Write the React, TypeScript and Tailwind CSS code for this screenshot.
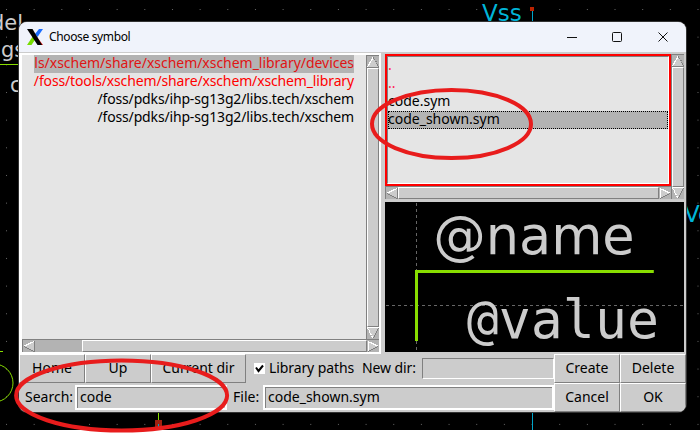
import type { ReactNode } from 'react';

const UI = "font-['Noto_Sans',sans-serif]";

type Dir = 'up' | 'down' | 'left' | 'right';

function Arrow({ dir }: { dir: Dir }) {
  const W = '#ffffff';
  const D = '#808080';
  const edges: Record<Dir, [string, string, string][]> = {
    up: [['M6 1.5L0.5 11', W, ''], ['M6.5 1.5L12 11', D, '1 1'], ['M0 11.5H12', D, '']],
    down: [['M0.5 1L6 11', W, '2 1'], ['M0 0.5H12', W, ''], ['M11.5 1L6.5 11', D, '']],
    left: [['M11 1.5L1 6', W, ''], ['M11.5 1V12', D, ''], ['M1 6.5L11 11.5', D, '']],
    right: [['M1 1.5L11 6', W, ''], ['M1.5 1V11', W, ''], ['M11 6.5L1 11.5', D, '']],
  };
  const fill = { up: '6,1 12,11.5 0,11.5', down: '0,0.5 12,0.5 6,11', left: '1,6 11.5,1 11.5,12', right: '11,6 1,1 1,12' };
  return (
    <svg width="12" height="12" viewBox="0 0 12 12" className="block shrink-0" shapeRendering="crispEdges">
      <polygon points={fill[dir]} fill="#cccccc" />
      {edges[dir].map(([d, c, dash]) => (
        <path key={d} d={d} stroke={c} strokeWidth="1.2" strokeDasharray={dash || undefined} fill="none" />
      ))}
    </svg>
  );
}

function VScroll() {
  return (
    <div className="flex w-[13px] shrink-0 flex-col border-t border-l border-[#808080] bg-[#b3b3b3]">
      <Arrow dir="up" />
      <div className="grow border-t border-r border-b border-l border-t-white border-r-[#808080] border-b-[#808080] border-l-white bg-[#cccccc]" />
      <Arrow dir="down" />
    </div>
  );
}

function HScroll({ offset }: { offset?: boolean }) {
  return (
    <div className="flex h-[13px] shrink-0 border-t border-l border-[#808080] bg-[#b3b3b3]">
      <Arrow dir="left" />
      {offset && <div className="w-[47px] shrink-0" />}
      <div className="grow border border-t-white border-r-[#808080] border-b-[#808080] border-l-white bg-[#cccccc]" />
      <Arrow dir="right" />
    </div>
  );
}

function Button({ className, children }: { className: string; children: ReactNode }) {
  return (
    <button
      className={`flex h-[29px] shrink-0 items-center justify-center border border-t-white border-r-[#808080] border-b-[#808080] border-l-white bg-[#cccccc] pb-px ${className}`}
    >
      {children}
    </button>
  );
}

function Entry({ className, value }: { className: string; value: string }) {
  return (
    <div className={`h-[25px] shrink-0 border-2 border-white ${className}`}>
      <div className="flex h-full items-center border-t border-l border-[#808080] pb-[2px] pl-[2px]">{value}</div>
    </div>
  );
}

function Backdrop() {
  return (
    <svg width="700" height="430" className="absolute top-0 left-0 font-['DejaVu_Sans',sans-serif]">
      <defs>
        <pattern id="dots" x="6" y="9" width="27.66" height="27.66" patternUnits="userSpaceOnUse">
          <rect width="1" height="1" fill="#666" />
        </pattern>
      </defs>
      <rect width="700" height="430" fill="#000" />
      <rect width="700" height="430" fill="url(#dots)" />
      <g fill="#cccccc" fontSize="21">
        <text x="-9" y="30">del</text>
        <text x="1" y="57">gs</text>
        <text x="10" y="92">c</text>
      </g>
      <path d="M0 64.5H20M0 351.5H3M158.5 411V420" stroke="#88dd00" />
      <circle cx="-6" cy="383" r="19" stroke="#88dd00" fill="none" />
      <g fill="#00b4d8" fontSize="23">
        <text x="482" y="21">Vss</text>
        <text x="684" y="222">Ve</text>
      </g>
      <path d="M532.5 9V22M532.5 411V430" stroke="#00a4c8" />
      <rect x="530" y="7" width="4" height="4" fill="#bb2200" />
      <rect x="155" y="420" width="7" height="7" fill="#a02010" />
      <path d="M158.5 424V427" stroke="#00a4c8" />
    </svg>
  );
}

function Preview() {
  return (
    <svg width="299" height="150" viewBox="385 202 299 150" className="block bg-black">
      <path d="M416.5 203V352M386 305.5H684" stroke="#666" strokeDasharray="3 3" />
      <path d="M653.8 271.5H416.5V341" stroke="#88dd00" strokeWidth="3" fill="none" />
      <g fill="#cccccc">
        <text x="433.2" y="253.5" fontSize="52.5" fontFamily="DejaVu Sans">@name</text>
        <text x="466.8" y="337.6" fontSize="53.2" fontFamily="DejaVu Sans Mono">@value</text>
      </g>
    </svg>
  );
}

const paths = ['/foss/pdks/ihp-sg13g2/libs.tech/xschem', '/foss/pdks/ihp-sg13g2/libs.tech/xschem'];

export default function App() {
  return (
    <div className={`relative h-[434px] w-[700px] overflow-hidden bg-white text-[14px] leading-[18px] whitespace-nowrap text-black ${UI}`}>
      <Backdrop />
      <div className="absolute top-[22px] left-[19px] flex h-[390px] w-[667px] flex-col overflow-hidden rounded-lg bg-[#cccccc] shadow-[0_0_0_1px_#333]">
        <header className="flex h-[30px] shrink-0 items-center bg-[#f0f3fb]">
          <svg width="16" height="16" viewBox="0 0 16 16" className="mr-[6px] ml-2">
            <path d="M12 0H16L10.5 8L8 5Z" fill="#1a6dff" />
            <path d="M10 8L16 16H13L8 11Z" fill="#e01010" />
            <path d="M0 16L6 7L8.5 10L4.5 16Z" fill="#77dd00" />
            <path d="M0 0H5.5L15 16H10.5Z" fill="#000" />
          </svg>
          <span className="grow text-[12px] tracking-[-0.36px]">Choose symbol</span>
          <svg width="112" height="12" viewBox="0 0 112 12" className="mr-[7px]" stroke="#111" fill="none">
            <path d="M0 6.5H10" />
            <rect x="45.5" y="1.5" width="9" height="9" rx="1" />
            <path d="M91.5 1.5L100.5 10.5M100.5 1.5L91.5 10.5" />
          </svg>
        </header>
        <main className="flex h-[302px] shrink-0 pt-px">
          <section className="mr-1 flex w-[362px] shrink-0 flex-col border-2 border-l-[3px] border-white">
            <div className="flex min-h-0 grow">
              <div className="flex min-w-0 grow flex-col items-end bg-[#e5e5e5] pr-3 tracking-[-0.16px]">
                <div className="flex h-[18px] w-[320px] justify-end bg-[#b3b3b3] leading-4 tracking-[-0.03px] text-[#e01414]">ls/xschem/share/xschem/xschem_library/devices</div>
                <div className="flex h-[18px] w-[320px] justify-end leading-4 tracking-[-0.14px] text-[#ff0000]">/foss/tools/xschem/share/xschem/xschem_library</div>
                {paths.map((p, i) => (
                  <div key={i} className="h-[18px] leading-4">{p}</div>
                ))}
              </div>
              <VScroll />
            </div>
            <HScroll offset />
          </section>
          <section className="flex w-[299px] shrink-0 flex-col pt-px">
            <div className="mb-[3px] flex h-[145px] shrink-0">
              <div className="flex grow flex-col">
                <div className="h-[132px] border-2 border-[#ff0000]">
                  <div className="h-full border-t border-r border-b border-l border-t-[#808080] border-r-white border-b-white border-l-[#808080] bg-[#e5e5e5]">
                    <div className="h-[18px] leading-4 text-[#ff2050]">.</div>
                    <div className="h-[18px] leading-4 text-[#ff2050]">..</div>
                    <div className="h-[18px] leading-4">code.sym</div>
                    <div className="h-[18px] bg-[#b3b3b3] leading-4 outline-1 -outline-offset-1 outline-black outline-dotted">code_shown.sym</div>
                  </div>
                </div>
                <HScroll />
              </div>
              <VScroll />
            </div>
            <Preview />
          </section>
        </main>
        <div className="flex h-[29px] shrink-0 items-center">
          <Button className="w-[66px]">Home</Button>
          <Button className="w-[66px]">Up</Button>
          <Button className="w-[95px]">Current dir</Button>
          <svg width="11" height="11" viewBox="0 0 11 11" className="ml-2 bg-white">
            <path d="M2 4.5L4.5 8L9 2.5" stroke="#000" strokeWidth="2" fill="none" />
          </svg>
          <span className="ml-1 w-[93px] pb-[2px] tracking-[-0.1px]">Library paths</span>
          <span className="w-[60px] pb-[2px] tracking-[-0.1px]">New dir:</span>
          <div className="h-[21px] w-[132px] border border-t-[#808080] border-r-white border-b-white border-l-[#808080]" />
          <Button className="w-[66px]">Create</Button>
          <Button className="w-[66px]">Delete</Button>
        </div>
        <div className="flex h-[29px] shrink-0 items-center">
          <span className="w-[56px] pb-[2px] pl-[6px]">Search:</span>
          <Entry className="w-[152px]" value="code" />
          <span className="w-[36px] pb-[2px] pl-[6px]">File:</span>
          <Entry className="w-[291px]" value="code_shown.sym" />
          <Button className="w-[66px]">Cancel</Button>
          <Button className="w-[66px]">OK</Button>
        </div>
      </div>
      <svg width="700" height="434" className="absolute top-0 left-0" stroke="#e81c1c" strokeWidth="4" fill="none">
        <ellipse cx="451.5" cy="124" rx="79.5" ry="34" />
        <ellipse cx="121.6" cy="395.5" rx="105.5" ry="35" />
      </svg>
    </div>
  );
}
